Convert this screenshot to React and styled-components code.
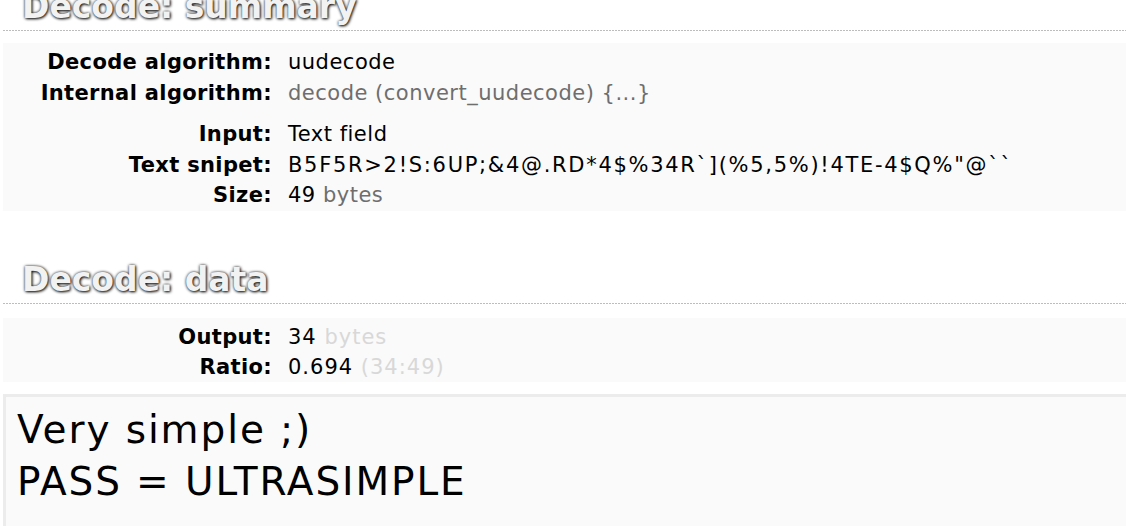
import React from "react";
import styled, { createGlobalStyle } from "styled-components";

const Global = createGlobalStyle`
  html, body { margin: 0; padding: 0; background: #fff; overflow: hidden; }
  body { font-family: "DejaVu Sans", Verdana, sans-serif; color: #000; }
`;

const Page = styled.div`
  margin-top: -16px;
  padding-left: 3px;
`;

const Section = styled.section`
  margin-bottom: ${(p) => p.$gap || 0}px;
`;

const Heading = styled.h2`
  margin: 0;
  padding: 0 0 1px 19px;
  height: 45px;
  line-height: 45px;
  font-family: "DejaVu Sans", Verdana, sans-serif;
  font-weight: bold;
  font-size: 33px;
  color: #f2f2f2;
  text-shadow: 1px 1px 3px #111, 0 0 3px #444;
  white-space: nowrap;
`;

const Dotted = styled.div`
  height: 1px;
  margin-bottom: ${(p) => p.$gap || 12}px;
  background-image: repeating-linear-gradient(
    to right,
    #bdbdbd 0,
    #bdbdbd 2px,
    transparent 2px,
    transparent 3px
  );
`;

const Panel = styled.div`
  background: #fafafa;
  padding: 4px 0 0 0;
`;

const Group = styled.div`
  & + & {
    margin-top: 11px;
  }
`;

const Row = styled.div`
  display: grid;
  grid-template-columns: 269px auto;
  column-gap: 16px;
  align-items: baseline;
  height: ${(p) => p.$h || 30.5}px;
  line-height: ${(p) => p.$h || 30.5}px;
  white-space: nowrap;
`;

const Label = styled.span`
  text-align: right;
  font-weight: bold;
  font-size: 21px;
  letter-spacing: 0.35px;
`;

const Value = styled.span`
  font-family: "DejaVu Sans", Verdana, sans-serif;
  font-size: 21px;
  letter-spacing: ${(p) => p.$spacing || "0.5px"};
  color: #000;
`;

const Muted = styled.span`
  color: ${(p) => (p.$faint ? "#d8d8d8" : "#6e6e6e")};
`;

const OutputBox = styled.div`
  background: #fafafa;
  border-top: 3px solid #ececec;
  border-left: 3px solid #ececec;
  padding: 7px 11px 0;
  height: 140px;
  font-family: "DejaVu Sans", Verdana, sans-serif;
  font-size: 39px;
  letter-spacing: 1.9px;
  line-height: 52px;
  white-space: pre;
`;

export default function App() {
  return (
    <>
      <Global />
      <Page>
        <Section $gap={46}>
          <Heading>Decode: summary</Heading>
          <Dotted $gap={12} />
          <Panel>
            <Group>
              <Row>
                <Label>Decode algorithm:</Label>
                <Value>uudecode</Value>
              </Row>
              <Row>
                <Label>Internal algorithm:</Label>
                <Value>
                  <Muted>decode (convert_uudecode) {"{...}"}</Muted>
                </Value>
              </Row>
            </Group>
            <Group>
              <Row>
                <Label>Input:</Label>
                <Value>Text field</Value>
              </Row>
              <Row>
                <Label>Text snipet:</Label>
                <Value $spacing="1.7px">
                  B5F5R&gt;2!S:6UP;&amp;4@.RD*4$%34R`](%5,5%)!4TE-4$Q%"@``
                </Value>
              </Row>
              <Row>
                <Label>Size:</Label>
                <Value>
                  49 <Muted>bytes</Muted>
                </Value>
              </Row>
            </Group>
          </Panel>
        </Section>
        <Section $gap={12}>
          <Heading>Decode: data</Heading>
          <Dotted $gap={14} />
          <Panel>
            <Row $h={30}>
              <Label>Output:</Label>
              <Value $spacing="1px">
                34 <Muted $faint>bytes</Muted>
              </Value>
            </Row>
            <Row $h={30}>
              <Label>Ratio:</Label>
              <Value $spacing="1px">
                0.694 <Muted $faint>(34:49)</Muted>
              </Value>
            </Row>
          </Panel>
        </Section>
        <OutputBox>{"Very simple ;)\nPASS = ULTRASIMPLE"}</OutputBox>
      </Page>
    </>
  );
}
